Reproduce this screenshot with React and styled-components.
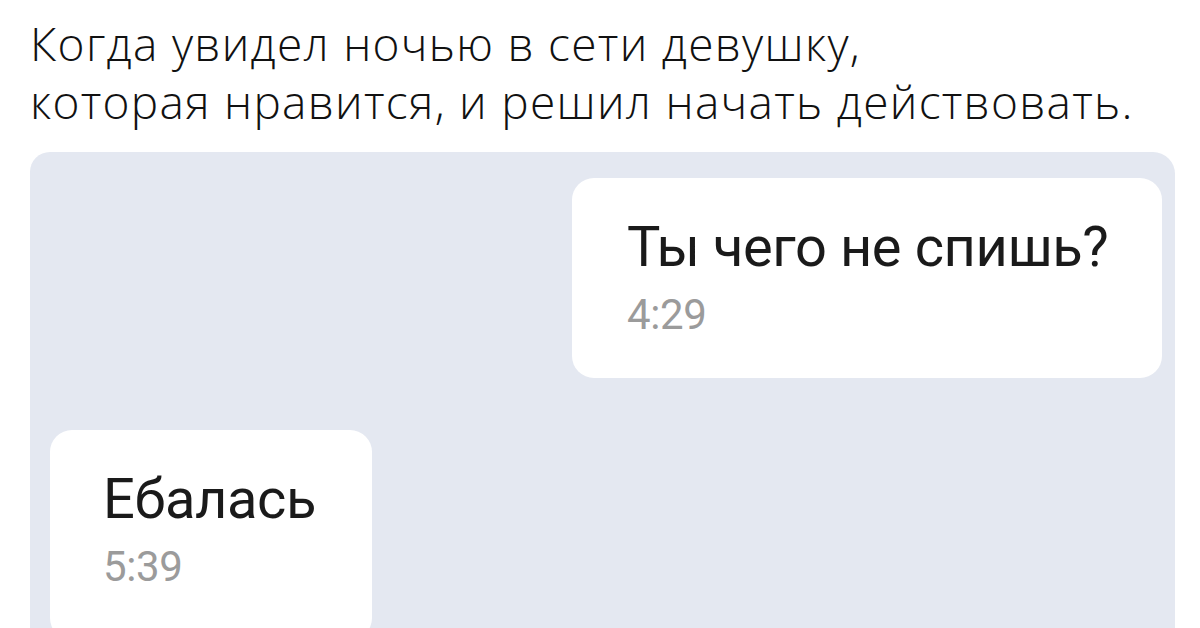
import React from 'react';
import styled, { createGlobalStyle } from 'styled-components';

const GlobalStyle = createGlobalStyle`
  html, body {
    margin: 0;
    padding: 0;
    background: #ffffff;
    overflow: hidden;
  }
`;

const Page = styled.div`
  width: 1200px;
  height: 628px;
  box-sizing: border-box;
  padding: 14px 25px 0 30px;
  display: flex;
  flex-direction: column;
  overflow: hidden;
`;

const Caption = styled.div`
  font-family: "Open Sans", "Noto Sans", sans-serif;
  font-weight: 300;
  font-size: 46px;
  line-height: 58px;
  letter-spacing: 1.3px;
  color: #111111;
  white-space: nowrap;
`;

const ChatPanel = styled.div`
  margin-top: 22px;
  flex: 1;
  background: #e4e8f1;
  border-radius: 20px 22px 0 0;
  padding: 26px 13px 0 20px;
  display: flex;
  flex-direction: column;
  gap: 52px;
`;

const Row = styled.div`
  display: flex;
  justify-content: ${({ $mine }) => ($mine ? 'flex-end' : 'flex-start')};
`;

const Bubble = styled.div`
  background: #ffffff;
  border-radius: 22px;
  box-sizing: border-box;
  width: ${({ $w }) => $w}px;
  height: ${({ $h }) => $h}px;
  padding: 39px 0 0 ${({ $pl }) => $pl}px;
  display: flex;
  flex-direction: column;
`;

const Text = styled.div`
  font-family: Roboto, "Liberation Sans", sans-serif;
  font-size: 56px;
  line-height: 60px;
  color: #1a1a1a;
  letter-spacing: -0.4px;
  white-space: nowrap;
`;

const Time = styled.div`
  margin-top: 16px;
  font-family: Roboto, "Liberation Sans", sans-serif;
  font-size: 42px;
  line-height: 44px;
  color: #9b9b9b;
  letter-spacing: -0.4px;
`;

export default function App() {
  return (
    <>
      <GlobalStyle />
      <Page>
        <Caption>
          Когда увидел ночью в сети девушку,
          <br />
          которая нравится, и решил начать действовать.
        </Caption>
        <ChatPanel>
          <Row $mine>
            <Bubble $w={590} $h={200} $pl={55}>
              <Text>Ты чего не спишь?</Text>
              <Time>4:29</Time>
            </Bubble>
          </Row>
          <Row>
            <Bubble $w={322} $h={210} $pl={53}>
              <Text>Ебалась</Text>
              <Time>5:39</Time>
            </Bubble>
          </Row>
        </ChatPanel>
      </Page>
    </>
  );
}
